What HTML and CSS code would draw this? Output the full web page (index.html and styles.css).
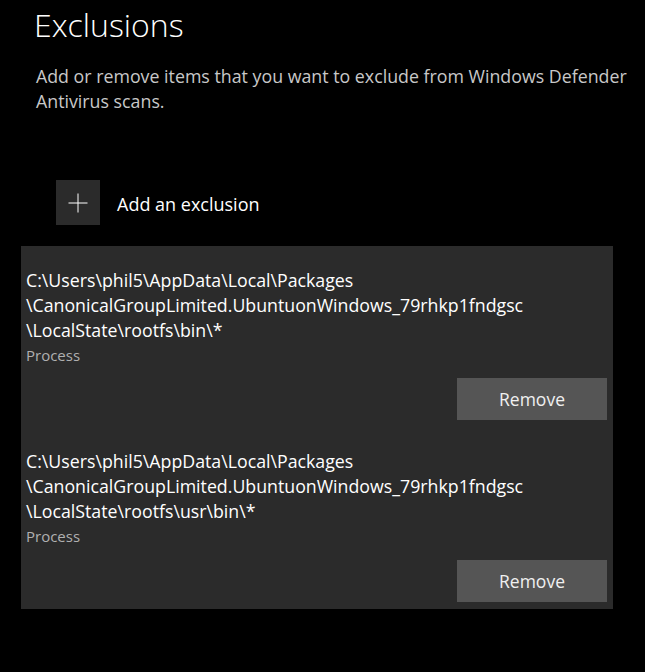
FILE: index.html
```html
<!DOCTYPE html>
<html lang="en">
<head>
<meta charset="utf-8">
<title>Exclusions</title>
<link rel="stylesheet" href="styles.css">
</head>
<body>
<main class="page">
  <h1 class="title">Exclusions</h1>
  <p class="desc">Add or remove items that you want to exclude from Windows Defender Antivirus scans.</p>

  <div class="add-row">
    <button class="add-btn" aria-label="Add an exclusion">
      <svg width="20" height="20" viewBox="0 0 20 20" aria-hidden="true">
        <line x1="10" y1="0.5" x2="10" y2="19.5" stroke="#ffffff" stroke-width="1"/>
        <line x1="0.5" y1="10" x2="19.5" y2="10" stroke="#ffffff" stroke-width="1"/>
      </svg>
    </button>
    <span class="add-label">Add an exclusion</span>
  </div>

  <ul class="list">
    <li class="item">
      <div class="path">C:\Users\phil5\AppData\Local\Packages<br>\CanonicalGroupLimited.UbuntuonWindows_79rhkp1fndgsc<br>\LocalState\rootfs\bin\*</div>
      <div class="kind">Process</div>
      <div class="actions"><button class="remove">Remove</button></div>
    </li>
    <li class="item">
      <div class="path">C:\Users\phil5\AppData\Local\Packages<br>\CanonicalGroupLimited.UbuntuonWindows_79rhkp1fndgsc<br>\LocalState\rootfs\usr\bin\*</div>
      <div class="kind">Process</div>
      <div class="actions"><button class="remove">Remove</button></div>
    </li>
  </ul>
</main>
</body>
</html>
```

FILE: styles.css
```css
* { box-sizing: border-box; }

html, body {
  margin: 0;
  padding: 0;
  background: #000000;
}

body {
  font-family: "Segoe UI", "Open Sans", "Noto Sans", sans-serif;
  color: #ffffff;
}

.page {
  padding-top: 3px;
}

.title {
  margin: 0 0 0 34px;
  font-size: 32px;
  font-weight: 300;
  line-height: 44px;
  color: #ffffff;
}

.desc {
  margin: 17px 0 0 36px;
  width: 605px;
  font-size: 17.8px;
  line-height: 25px;
  color: #c8c8c8;
}

.add-row {
  margin: 66px 0 0 56px;
  display: flex;
  align-items: center;
  gap: 17px;
}

.add-btn {
  width: 44px;
  height: 45px;
  border: 0;
  padding: 0;
  margin: 0;
  background: #2b2b2b;
  display: flex;
  align-items: center;
  justify-content: center;
}

.add-btn svg { display: block; }

.add-label {
  padding-top: 4px;
  font-size: 18px;
  line-height: 25px;
  color: #ffffff;
}

.list {
  list-style: none;
  margin: 21px 0 0 21px;
  padding: 0 0 2px;
  width: 592px;
  background: #2b2b2b;
}

.item {
  padding: 22px 6px 5px 5px;
}

.item + .item {
  padding-top: 24px;
}

.path {
  font-size: 17.75px;
  line-height: 25px;
  color: #ffffff;
}

.kind {
  padding-top: 2px;
  font-size: 15px;
  line-height: 21.3px;
  color: #b0b0b0;
}

.actions {
  display: flex;
  justify-content: flex-end;
  margin-top: 12px;
}

.remove {
  width: 150px;
  height: 42px;
  border: 0;
  padding: 0;
  background: #555555;
  color: #f0f0f0;
  font-family: inherit;
  font-size: 17.5px;
}
```
